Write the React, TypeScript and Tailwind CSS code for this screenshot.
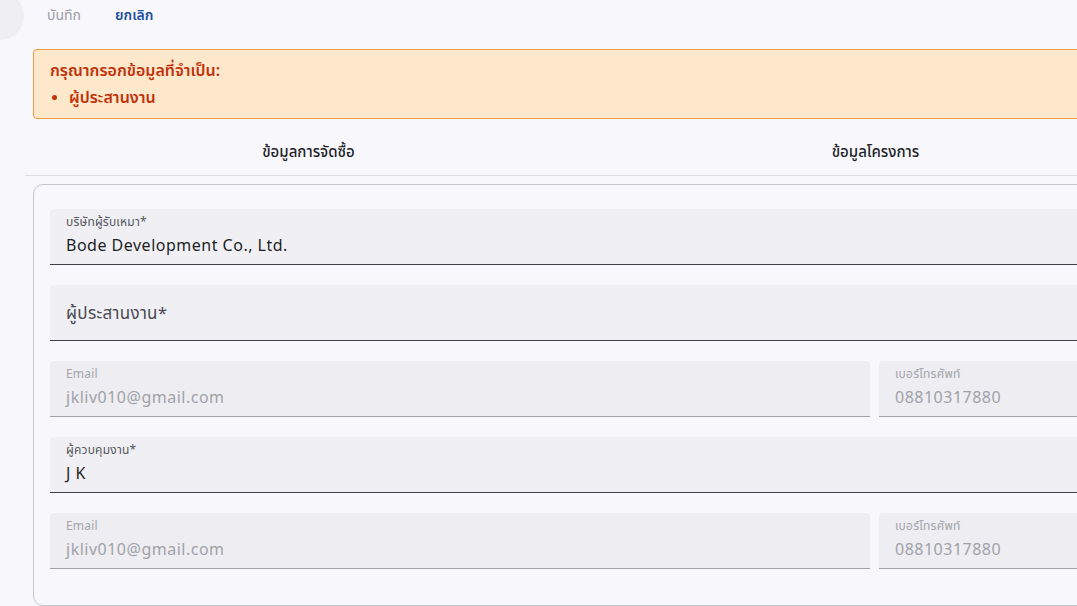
import React from 'react';

const font = { fontFamily: '"Noto Sans", "Noto Sans Thai", "DejaVu Sans", sans-serif' };

interface FieldProps {
  label: string;
  value?: string;
  disabled?: boolean;
  className?: string;
}

const Field: React.FC<FieldProps> = ({ label, value, disabled, className }) => {
  if (!value) {
    return (
      <div className={`h-[56px] rounded-t-[4px] bg-[#f0f0f4] border-b border-[#3f4148] flex items-center px-4 ${className ?? ''}`}>
        <span className="text-[17px] tracking-[0.3px] text-[#4a4a52]">{label}</span>
      </div>
    );
  }
  return (
    <div
      className={`h-[56px] rounded-t-[4px] flex flex-col px-4 pt-[5px] border-b ${
        disabled ? 'bg-[#ededf2] border-[#a2a3a8]' : 'bg-[#f0f0f4] border-[#3f4148]'
      } ${className ?? ''}`}
    >
      <span className={`text-[12px] leading-[16px] tracking-[0.2px] ${disabled ? 'text-[#a4a5ab]' : 'text-[#55565c]'}`}>{label}</span>
      <span className={`text-[16px] leading-[24px] mt-[3px] tracking-[0.5px] ${disabled ? 'text-[#a1a2a8]' : 'text-[#1e1f24]'}`}>{value}</span>
    </div>
  );
};

export default function App() {
  return (
    <div className="w-[1077px] h-[606px] overflow-hidden bg-[#f8f8fc]" style={font}>
      <div className="relative w-[1200px]">
        <div className="absolute -left-[24px] -top-[8px] w-[48px] h-[48px] rounded-full bg-[#eeeef3]" />

        <div className="flex items-center gap-[34px] pl-[47px] h-[29px] text-[14px]">
          <span className="text-[#9b9ca3]">บันทึก</span>
          <span className="text-[#1d4f9c] font-semibold">ยกเลิก</span>
        </div>

        <div className="ml-[33px] mt-[20px] w-[1130px] h-[70px] rounded-[4px] border border-[#f39a45] bg-[#fde8cc] pl-[16px] pt-[9px]">
          <div className="text-[16px] leading-[22px] font-semibold text-[#c1320a]">กรุณากรอกข้อมูลที่จำเป็น:</div>
          <div className="flex items-center gap-[12px] text-[16px] leading-[22px] font-semibold text-[#c1320a] mt-[5px]">
            <span className="w-[5px] h-[5px] rounded-full bg-[#c1320a] ml-[2px]" />
            <span>ผู้ประสานงาน</span>
          </div>
        </div>

        <div className="ml-[25px] w-[1134px] mt-[8px] flex border-b border-[#dfe0e4]">
          <div className="flex-1 h-[48px] flex items-center justify-center text-[15px] font-medium text-[#232428]">ข้อมูลการจัดซื้อ</div>
          <div className="flex-1 h-[48px] flex items-center justify-center text-[15px] font-medium text-[#232428]">ข้อมูลโครงการ</div>
        </div>

        <div className="ml-[33px] mt-[8px] w-[1138px] h-[422px] rounded-[10px] border border-[#c3c5cd] px-[16px] pt-[24px] flex flex-col gap-[20px]">
          <Field label="บริษัทผู้รับเหมา*" value="Bode Development Co., Ltd." />
          <Field label="ผู้ประสานงาน*" />
          <div className="flex gap-[9px]">
            <Field label="Email" value="jkliv010@gmail.com" disabled className="w-[820px]" />
            <Field label="เบอร์โทรศัพท์" value="08810317880" disabled className="flex-1" />
          </div>
          <Field label="ผู้ควบคุมงาน*" value="J K" />
          <div className="flex gap-[9px]">
            <Field label="Email" value="jkliv010@gmail.com" disabled className="w-[820px]" />
            <Field label="เบอร์โทรศัพท์" value="08810317880" disabled className="flex-1" />
          </div>
        </div>
      </div>
    </div>
  );
}
